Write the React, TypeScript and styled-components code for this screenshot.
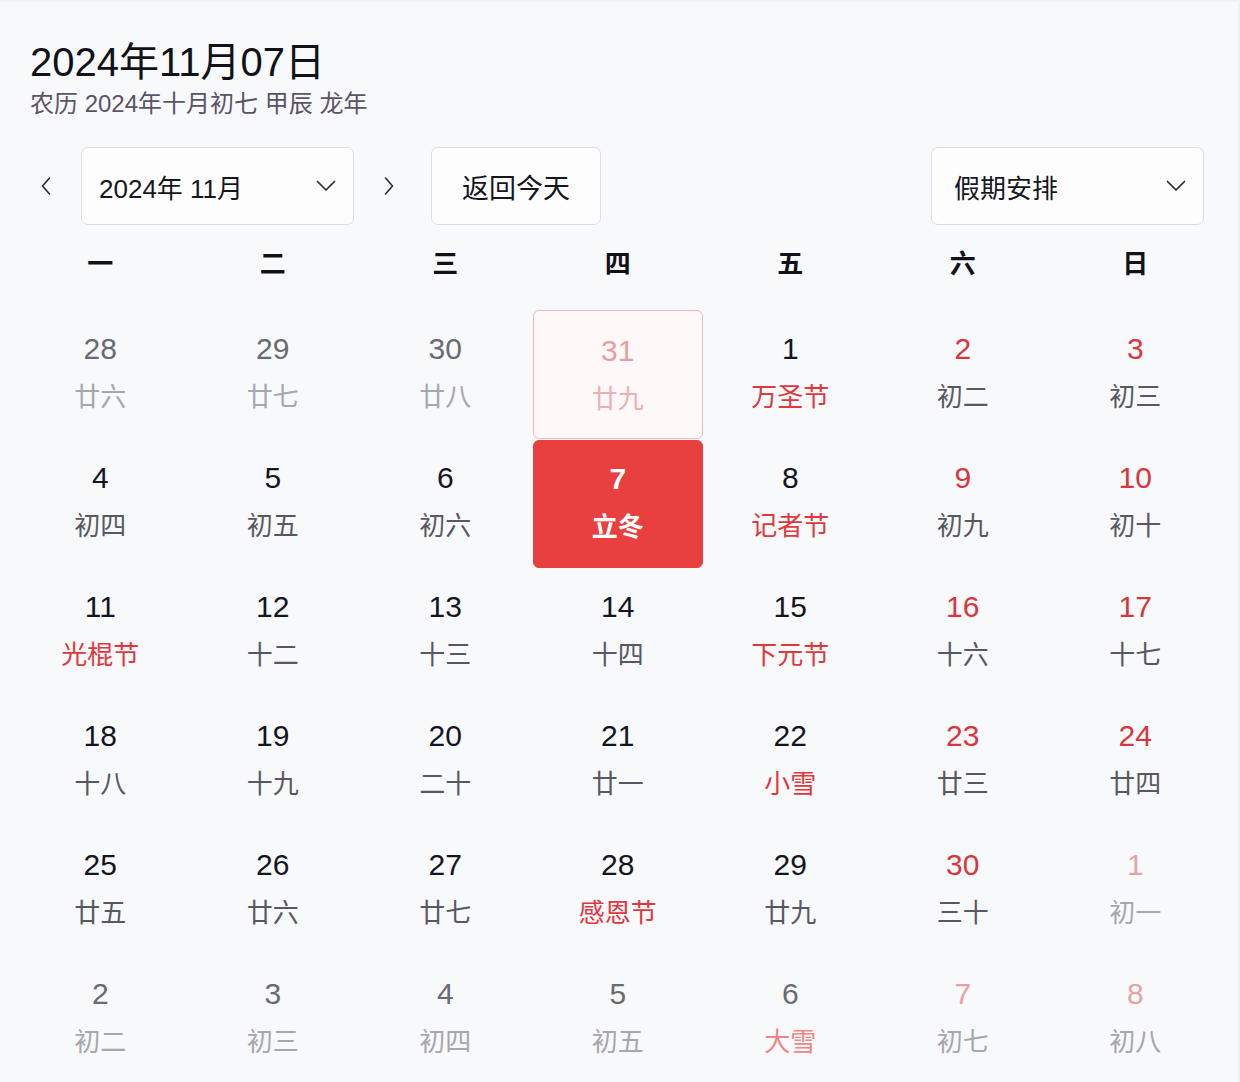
import styled, { createGlobalStyle, css } from 'styled-components';

const GlobalStyle = createGlobalStyle`
  html, body {
    margin: 0;
    padding: 0;
    background: #f8f9fb;
  }
  body {
    font-family: "Liberation Sans", "Noto Sans CJK SC", sans-serif;
    color: #15151f;
  }
  * { box-sizing: border-box; }
`;

const Page = styled.div`
  width: 1240px;
  height: 1082px;
  overflow: hidden;
  background: #f8f9fb;
  border-right: 2px solid #eff0f3;
  border-top: 2px solid #f1f2f5;
  padding-top: 34px;
`;

const Header = styled.div`
  padding-left: 30px;
`;

const Title = styled.div`
  font-size: 40px;
  line-height: 52px;
  color: #111118;
`;

const Lunar = styled.div`
  font-size: 24px;
  line-height: 32px;
  color: #5b5368;
`;

const Toolbar = styled.div`
  display: flex;
  align-items: center;
  margin-top: 27px;
  padding: 0 34px 0 30px;
  height: 78px;
`;

const ArrowButton = styled.button<{ $gap?: number }>`
  width: 32px;
  height: 78px;
  padding: 0;
  margin-left: ${p => p.$gap ?? 0}px;
  border: 0;
  background: transparent;
  display: flex;
  align-items: center;
  justify-content: center;
  color: #2a2a35;
  cursor: pointer;
`;

const Select = styled.div<{ $push?: boolean; $gap: number; $padLeft: number }>`
  width: 273px;
  height: 78px;
  margin-left: ${p => p.$gap}px;
  ${p => p.$push && css`margin-left: auto;`}
  background: #fdfdfe;
  border: 1px solid #dcdde4;
  border-radius: 7px;
  display: flex;
  align-items: center;
  justify-content: space-between;
  padding: 0 17px 0 ${p => p.$padLeft}px;
  font-size: 26px;
  color: #16161f;
`;

const TodayButton = styled.button`
  width: 170px;
  height: 78px;
  margin-left: 26px;
  background: #fdfdfe;
  border: 1px solid #dcdde4;
  border-radius: 7px;
  font-family: inherit;
  font-size: 27px;
  color: #16161f;
  cursor: pointer;
`;

const Grid = styled.div`
  display: grid;
  grid-template-columns: repeat(7, 172.5px);
  padding-left: 14px;
`;

const Weekday = styled.div`
  height: 85px;
  display: flex;
  align-items: center;
  justify-content: center;
  padding-bottom: 12px;
  font-size: 26px;
  font-weight: 700;
  color: #111118;
`;

type Kind = 'normal' | 'other' | 'outline' | 'today';

const Cell = styled.div<{ $kind: Kind }>`
  height: 129px;
  margin: 0 1.5px;
  border-radius: 6px;
  border: 1px solid transparent;
  display: flex;
  flex-direction: column;
  align-items: center;
  padding-top: 20px;
  ${p => p.$kind === 'outline' && css`
    border-color: #f1b9bc;
    background: #fff8f8;
    padding-top: 22px;
  `}
  ${p => p.$kind === 'today' && css`
    background: #e8403f;
    border-color: #e8403f;
    height: 128px;
    margin-top: 1px;
  `}
`;

const dayColor = (kind: Kind, red: boolean) => {
  if (kind === 'today') return '#ffffff';
  if (kind === 'outline') return '#e4a0a3';
  if (kind === 'other') return red ? '#e9a2a4' : '#6a6a72';
  return red ? '#d8363d' : '#15151f';
};

const lunarColor = (kind: Kind, fest: boolean) => {
  if (kind === 'today') return '#ffffff';
  if (kind === 'outline') return '#ebb0b3';
  if (kind === 'other') return fest ? '#f08587' : '#a6a6ae';
  return fest ? '#e0373d' : '#585862';
};

const DayNum = styled.div<{ $kind: Kind; $red: boolean }>`
  font-size: 30px;
  line-height: 36px;
  font-weight: ${p => (p.$kind === 'today' ? 700 : 400)};
  color: ${p => dayColor(p.$kind, p.$red)};
`;

const DayLunar = styled.div<{ $kind: Kind; $fest: boolean }>`
  margin-top: 12px;
  font-size: 26px;
  line-height: 36px;
  font-weight: ${p => (p.$kind === 'today' ? 700 : 400)};
  color: ${p => lunarColor(p.$kind, p.$fest)};
`;

const Chevron = ({ dir }: { dir: 'left' | 'right' | 'down' }) => {
  if (dir === 'down') {
    return (
      <svg width="20" height="12" viewBox="0 0 20 12" fill="none">
        <path d="M1.5 1.5 L10 10 L18.5 1.5" stroke="#2a2a35" strokeWidth="1.7" strokeLinecap="round" strokeLinejoin="round" />
      </svg>
    );
  }
  return (
    <svg width="12" height="20" viewBox="0 0 12 20" fill="none">
      <path
        d={dir === 'left' ? 'M9.5 2 L2.5 10 L9.5 18' : 'M2.5 2 L9.5 10 L2.5 18'}
        stroke="#2a2a35"
        strokeWidth="1.6"
        strokeLinecap="round"
        strokeLinejoin="round"
      />
    </svg>
  );
};

type Day = { d: number; l: string; kind?: Kind; fest?: boolean };

const weekdays = ['一', '二', '三', '四', '五', '六', '日'];

const days: Day[] = [
  { d: 28, l: '廿六', kind: 'other' },
  { d: 29, l: '廿七', kind: 'other' },
  { d: 30, l: '廿八', kind: 'other' },
  { d: 31, l: '廿九', kind: 'outline' },
  { d: 1, l: '万圣节', fest: true },
  { d: 2, l: '初二' },
  { d: 3, l: '初三' },
  { d: 4, l: '初四' },
  { d: 5, l: '初五' },
  { d: 6, l: '初六' },
  { d: 7, l: '立冬', kind: 'today', fest: true },
  { d: 8, l: '记者节', fest: true },
  { d: 9, l: '初九' },
  { d: 10, l: '初十' },
  { d: 11, l: '光棍节', fest: true },
  { d: 12, l: '十二' },
  { d: 13, l: '十三' },
  { d: 14, l: '十四' },
  { d: 15, l: '下元节', fest: true },
  { d: 16, l: '十六' },
  { d: 17, l: '十七' },
  { d: 18, l: '十八' },
  { d: 19, l: '十九' },
  { d: 20, l: '二十' },
  { d: 21, l: '廿一' },
  { d: 22, l: '小雪', fest: true },
  { d: 23, l: '廿三' },
  { d: 24, l: '廿四' },
  { d: 25, l: '廿五' },
  { d: 26, l: '廿六' },
  { d: 27, l: '廿七' },
  { d: 28, l: '感恩节', fest: true },
  { d: 29, l: '廿九' },
  { d: 30, l: '三十' },
  { d: 1, l: '初一', kind: 'other' },
  { d: 2, l: '初二', kind: 'other' },
  { d: 3, l: '初三', kind: 'other' },
  { d: 4, l: '初四', kind: 'other' },
  { d: 5, l: '初五', kind: 'other' },
  { d: 6, l: '大雪', kind: 'other', fest: true },
  { d: 7, l: '初七', kind: 'other' },
  { d: 8, l: '初八', kind: 'other' },
];

export default function App() {
  return (
    <>
      <GlobalStyle />
      <Page>
        <Header>
          <Title>2024年11月07日</Title>
          <Lunar>农历 2024年十月初七 甲辰 龙年</Lunar>
        </Header>

        <Toolbar>
          <ArrowButton aria-label="上个月"><Chevron dir="left" /></ArrowButton>
          <Select $gap={19} $padLeft={17}>
            <span>2024年 11月</span>
            <Chevron dir="down" />
          </Select>
          <ArrowButton aria-label="下个月" $gap={19}><Chevron dir="right" /></ArrowButton>
          <TodayButton>返回今天</TodayButton>
          <Select $gap={0} $padLeft={22} $push>
            <span>假期安排</span>
            <Chevron dir="down" />
          </Select>
        </Toolbar>

        <Grid>
          {weekdays.map(w => (
            <Weekday key={w}>{w}</Weekday>
          ))}
          {days.map((day, i) => {
            const kind = day.kind ?? 'normal';
            const weekend = i % 7 >= 5;
            return (
              <Cell key={i} $kind={kind}>
                <DayNum $kind={kind} $red={weekend}>{day.d}</DayNum>
                <DayLunar $kind={kind} $fest={!!day.fest}>{day.l}</DayLunar>
              </Cell>
            );
          })}
        </Grid>
      </Page>
    </>
  );
}
